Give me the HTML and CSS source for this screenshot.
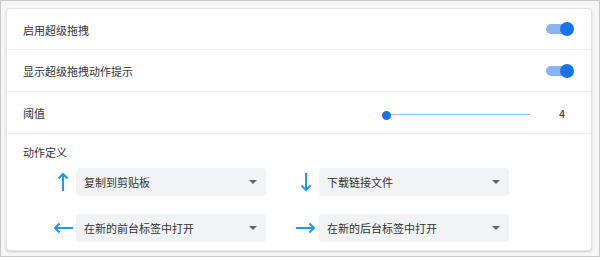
FILE: index.html
```html
<!DOCTYPE html>
<html lang="zh-CN">
<head>
<meta charset="utf-8">
<link rel="stylesheet" href="styles.css">
</head>
<body>
<div class="frame">
  <div class="card">
    <div class="row">
      <span class="label">启用超级拖拽</span>
      <span class="toggle"><span class="track"></span><span class="knob"></span></span>
    </div>
    <div class="row">
      <span class="label">显示超级拖拽动作提示</span>
      <span class="toggle"><span class="track"></span><span class="knob"></span></span>
    </div>
    <div class="row">
      <span class="label">阈值</span>
      <span class="slider"><span class="line"></span><span class="dot"></span></span>
      <span class="value">4</span>
    </div>
    <div class="section">
      <div class="section-title">动作定义</div>
      <div class="grid">
        <div class="item">
          <span class="arrow"><svg width="20" height="20" viewBox="0 0 20 20"><path d="M10 19V2M5.5 6.5l4.5-4.5 4.5 4.5" fill="none" stroke="#2196f3" stroke-width="2"/></svg></span>
          <span class="select"><span>复制到剪贴板</span><span class="caret"></span></span>
        </div>
        <div class="item">
          <span class="arrow"><svg width="20" height="20" viewBox="0 0 20 20"><path d="M10 1v17M5.5 13.5l4.5 4.5 4.5-4.5" fill="none" stroke="#2196f3" stroke-width="2"/></svg></span>
          <span class="select"><span>下载链接文件</span><span class="caret"></span></span>
        </div>
        <div class="item">
          <span class="arrow"><svg width="20" height="20" viewBox="0 0 20 20"><path d="M20 10H2M6.5 5.5l-4.5 4.5 4.5 4.5" fill="none" stroke="#2196f3" stroke-width="2"/></svg></span>
          <span class="select"><span>在新的前台标签中打开</span><span class="caret"></span></span>
        </div>
        <div class="item">
          <span class="arrow"><svg width="20" height="20" viewBox="0 0 20 20"><path d="M0 10h18M13.5 5.5l4.5 4.5-4.5 4.5" fill="none" stroke="#2196f3" stroke-width="2"/></svg></span>
          <span class="select"><span>在新的后台标签中打开</span><span class="caret"></span></span>
        </div>
      </div>
    </div>
  </div>
</div>
</body>
</html>
```
FILE: styles.css
```css
html, body {
  margin: 0;
  padding: 0;
}
body {
  width: 600px;
  height: 257px;
  font-family: "Noto Sans CJK SC", "Noto Sans", sans-serif;
  font-size: 11px;
  color: #333;
}
.frame {
  box-sizing: border-box;
  width: 600px;
  height: 257px;
  border: 1px solid #c9c9c9;
  background: #f6f6f6;
  padding: 7px 7px 6px 5px;
}
.card {
  box-sizing: border-box;
  height: 243px;
  background: #fff;
  border: 1px solid #e4e4e4;
  border-radius: 4px;
  box-shadow: 0 1px 2px rgba(0,0,0,0.18);
}
.row {
  box-sizing: border-box;
  height: 42px;
  display: flex;
  align-items: center;
  padding: 0 17px 0 16px;
  border-bottom: 1px solid #efefef;
}
.row:first-child {
  height: 41px;
}
.label {
  flex: 1;
  line-height: 16px;
  padding-top: 1px;
}
.toggle {
  position: relative;
  width: 28px;
  height: 14px;
  display: flex;
  align-items: center;
}
.track {
  display: block;
  width: 26px;
  height: 10px;
  border-radius: 5px;
  background: #8ab4f8;
}
.knob {
  position: absolute;
  right: 0;
  top: 0;
  width: 14px;
  height: 14px;
  border-radius: 50%;
  background: #1a73e8;
}
.slider {
  position: relative;
  width: 148px;
  height: 10px;
  margin-top: 4px;
  display: flex;
  align-items: center;
}
.line {
  display: block;
  width: 100%;
  height: 1px;
  background: #9cc1f7;
}
.dot {
  position: absolute;
  left: 0;
  top: 1px;
  width: 9px;
  height: 9px;
  border-radius: 50%;
  background: #1a73e8;
}
.value {
  width: 44px;
  text-align: right;
  padding-right: 9px;
  box-sizing: border-box;
  color: #222;
}
.section {
  padding: 10px 16px 8px 16px;
}
.section-title {
  line-height: 16px;
  margin-bottom: 8px;
}
.grid {
  display: grid;
  grid-template-columns: 243px 243px;
  column-gap: 0;
  row-gap: 18px;
  padding-left: 30px;
}
.item {
  display: flex;
  align-items: center;
  gap: 3px;
}
.arrow {
  width: 20px;
  height: 20px;
  display: flex;
}
.select {
  box-sizing: border-box;
  width: 190px;
  height: 28px;
  background: #f1f3f4;
  border-radius: 4px;
  display: flex;
  align-items: center;
  justify-content: space-between;
  padding: 0 9px 0 8px;
  color: #333;
}
.caret {
  width: 0;
  height: 0;
  border-left: 4.5px solid transparent;
  border-right: 4.5px solid transparent;
  border-top: 4.5px solid #5f6368;
}
```
